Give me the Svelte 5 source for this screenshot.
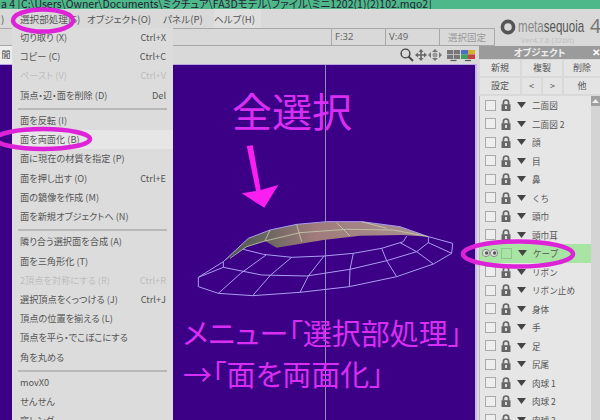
<script>
  const menuBar = ['オブジェクト(O)', 'パネル(P)', 'ヘルプ(H)'];
  const menu = [
    { t: '切り取り (X)', k: 'Ctrl+X' },
    { t: 'コピー (C)', k: 'Ctrl+C' },
    { t: 'ペースト (V)', k: 'Ctrl+V', off: true },
    { t: '頂点・辺・面を削除 (D)', k: 'Del' },
    { sep: true },
    { t: '面を反転 (I)' },
    { t: '面を両面化 (B)', hot: true },
    { t: '面に現在の材質を指定 (P)' },
    { t: '面を押し出す (O)', k: 'Ctrl+E' },
    { t: '面の鏡像を作成 (M)' },
    { t: '面を新規オブジェクトへ (N)' },
    { sep: true },
    { t: '隣り合う選択面を合成 (A)' },
    { t: '面を三角形化 (T)' },
    { t: '2頂点を対称にする (R)', k: 'Ctrl+R', off: true },
    { t: '選択頂点をくっつける (J)', k: 'Ctrl+J' },
    { t: '頂点の位置を揃える (L)' },
    { t: '頂点を平ら・でこぼこにする' },
    { t: '角を丸める' },
    { sep: true },
    { t: 'movX0' },
    { t: 'せんせん' },
    { t: '窓レンダ' }
  ];
  const objects = ['二面図', '二面図 2', '顔', '目', '鼻', 'くち', '頭巾', '頭巾耳', 'ケープ', 'リボン', 'リボン止め', '身体', '手', '足', '尻尾', '肉球 1', '肉球 2', '肉球 3'];
  const wire = [
    '55,262 55,290 115,310 218,317 360,307 508,290 650,260 760,222 815,190 818,160 745,140',
    '55,262 130,215 205,145 270,120 350,103 440,95 545,95 660,110 745,140',
    '130,215 130,232 245,255 380,258 510,238 620,212 710,185 745,158',
    '190,178 250,193 335,202 432,198 520,190 605,175 670,155 680,138',
    '115,310 182,250 258,195',
    '218,317 272,255 335,202',
    '360,307 385,258 432,198',
    '508,290 510,238 520,190',
    '650,260 620,212 605,175',
    '760,222 710,185 660,158',
    '815,190 745,158 745,140',
    '55,262 130,232'
  ];
  const top = [
    '150,205 200,170 255,153 360,128 500,118 640,120 745,140',
    '270,120 255,153',
    '350,103 365,155',
    '470,98 510,138',
    '545,95 620,115'
  ];
</script>

<div class="app">
  <div class="title">a 4 [C:\Users\Owner\Documents\ミクチュア\FA3Dモデル\ファイル\ミニ1202(1)(2)102.mqo2]</div>

  <div class="head">
    <div class="head-left">
      <div class="menubar">
        <span class="prev">)</span>
        <span class="first">選択部処理(S)</span>
        {#each menuBar as m, i}
          <span class={'mb mb' + i}>{m}</span>
        {/each}
      </div>
      <div class="status">
        <div class="cell grow"></div>
        <div class="cell f">F:32</div>
        <div class="cell v">V:49</div>
        <div class="cell fix">選択固定</div>
      </div>
    </div>
    <div class="logo">
      <div class="logo-line">
        <svg class="logo-mark" viewBox="0 0 16 16" width="16" height="16">
          <circle cx="8" cy="8" r="5.6" fill="none" stroke="#555" stroke-width="3.6" />
          <circle cx="8" cy="8" r="2.4" fill="#d8d8d8" />
        </svg>
        <span class="logo-text"><span class="lt">meta</span><span class="dk">sequoia</span></span><span class="four">4</span>
      </div>
      <div class="ver">Ver4.7.6 (32bit)</div>
    </div>
  </div>

  <div class="body">
    <div class="work">
      <div class="toolbar">
        <span class="tab">聞</span>
        <div class="tools">
          <svg viewBox="-3 0 78 14" width="78" height="14">
            <circle cx="5.5" cy="5.5" r="4.4" fill="none" stroke="#444" stroke-width="1.4" />
            <path d="M8.5 8.5 L13 13" stroke="#444" stroke-width="1.8" />
            <path d="M21 1 L18.5 4 H20.2 V6.2 H18 V4.5 L15 7 L18 9.5 V7.8 H20.2 V10 H18.5 L21 13 L23.5 10 H21.8 V7.8 H24 V9.5 L27 7 L24 4.5 V6.2 H21.8 V4 H23.5 Z" fill="#666" />
            <path d="M35 1 L38 4 H32 Z M35 13 L32 10 H38 Z M28 7 L31 4 V10 Z M42 7 L39 4 V10 Z" fill="#777" />
            <circle cx="35" cy="7" r="2.5" fill="#999" />
            <rect x="47" y="2" width="13" height="9" fill="#777" />
            <path d="M47 6.5 H60 M53.5 2 V11" stroke="#bbb" stroke-width="1" />
            <path d="M50.5 12.5 H56.5" stroke="#555" stroke-width="1.2" />
            <rect x="61" y="2" width="7" height="4.5" fill="#4a6fc0" />
            <rect x="68" y="2" width="7" height="4.5" fill="#d8b030" />
            <rect x="61" y="6.5" width="7" height="4.5" fill="#40a060" />
            <rect x="68" y="6.5" width="7" height="4.5" fill="#c84040" />
            <path d="M65 12.5 H71" stroke="#555" stroke-width="1.2" />
          </svg>
        </div>
      </div>
      <div class="view">
        <div class="axis"></div>
        <svg class="mesh" viewBox="0 0 840 360" width="280" height="120">
          <defs>
            <linearGradient id="skin" x1="0" x2="1" y1="0" y2="0">
              <stop offset="0" stop-color="#4a5a50" />
              <stop offset="0.22" stop-color="#6d6660" />
              <stop offset="0.45" stop-color="#a07c7c" />
              <stop offset="1" stop-color="#a89090" />
            </linearGradient>
          </defs>
          <polygon points="130,215 205,145 270,120 350,103 440,95 545,95 660,110 745,140 670,135 540,137 430,150 290,173 255,153 200,170" fill="url(#skin)" />
          {#each wire as p}
            <polyline points={p} fill="none" stroke="#ab9df2" stroke-width="3" />
          {/each}
          {#each top as p}
            <polyline points={p} fill="none" stroke="#c8d0b0" stroke-width="2.4" />
          {/each}
        </svg>
        <div class="note big">全選択</div>
        <div class="note l1">メニュー「選択部処理」</div>
        <div class="note l2">→「面を両面化」</div>
      </div>
    </div>

    <aside class="panel">
      <div class="p-head"><span>オブジェクト</span><span class="x">✕</span></div>
      <div class="btns">
        <span class="b">新規</span><span class="b">複製</span><span class="b">削除</span>
        <span class="b">設定</span>
        <span class="pair"><span class="b">&lt;</span><span class="b">&gt;</span></span>
        <span class="b">他</span>
      </div>
      <div class="listwrap">
        <div class="list">
          {#each objects as o, i}
            <div class="row" class:sel={i === 8}>
              {#if i === 8}
                <svg class="eyes" viewBox="0 0 16 10" width="16" height="10">
                  <circle cx="4" cy="5" r="3.6" fill="#e4e4e4" stroke="#888" />
                  <circle cx="12" cy="5" r="3.6" fill="#e4e4e4" stroke="#888" />
                  <circle cx="4.6" cy="5" r="1.7" fill="#555" />
                  <circle cx="12.6" cy="5" r="1.7" fill="#555" />
                </svg>
                <span class="check"></span>
              {:else}
                <span class="check"></span>
                <svg class="lock" viewBox="0 0 10 12" width="10" height="12">
                  <path d="M2.4 5.5 V3.6 A2.6 2.6 0 0 1 7.6 3.6 V5.5" fill="none" stroke="#666" stroke-width="1.7" />
                  <rect x="0.5" y="5.2" width="9" height="6.8" fill="#666" />
                  <rect x="4" y="7" width="2" height="3" fill="#ddd" />
                </svg>
              {/if}
              <svg class="tri" viewBox="0 0 9 6" width="9" height="6"><path d="M0 0 H9 L4.5 6 Z" fill="#444" /></svg>
              <span class="name">{o}</span>
            </div>
          {/each}
        </div>
        <div class="scroll"><svg viewBox="0 0 9 10" width="9" height="10"><path d="M1 7 L4.5 3 L8 7 Z" fill="#eee" /></svg></div>
      </div>
    </aside>
  </div>

  <div class="menu">
    {#each menu as m}
      {#if m.sep}
        <div class="sep"></div>
      {:else}
        <div class="item" class:off={m.off} class:hot={m.hot}>
          <span>{m.t}</span>
          {#if m.k}<span>{m.k}</span>{/if}
        </div>
      {/if}
    {/each}
  </div>

  <svg class="ink" viewBox="0 0 600 420" width="600" height="420">
    <ellipse cx="43" cy="20.5" rx="30" ry="11" />
    <ellipse cx="43" cy="139" rx="47" ry="10" />
    <ellipse cx="518" cy="254" rx="55" ry="12.5" />
    <polygon class="arrow" points="246.7,146 252.7,145.3 260.7,190 278.3,185 264.3,207.7 241.7,193.3 256,191" />
  </svg>
</div>

<style>
  :global(body) { margin: 0; }
  .app {
    position: relative;
    width: 600px;
    height: 420px;
    overflow: hidden;
    background: #d9d9d9;
    color: #444;
    font-family: "Noto Sans CJK JP", "Noto Sans", sans-serif;
    font-size: 9.2px;
    font-feature-settings: "palt";
    display: flex;
    flex-direction: column;
  }
  .title {
    height: 9px;
    flex: none;
    background: #4fb88a;
    color: #223;
    line-height: 7px;
    font-size: 10.5px;
    padding-left: 1px;
    overflow: hidden;
    white-space: nowrap;
  }
  .head { height: 37px; flex: none; display: flex; }
  .head-left { width: 495px; flex: none; display: flex; flex-direction: column; }
  .menubar {
    height: 19px;
    display: flex;
    align-items: center;
    white-space: nowrap;
    color: #555;
    font-size: 9.6px;
  }
  .prev { width: 20px; padding-left: 1px; box-sizing: border-box; }
  .first { width: 67px; }
  .mb { flex: none; }
  .mb0 { width: 76px; }
  .mb1 { width: 51px; }
  .mb2 { background: #dfdfdf; padding: 3px 6px 3px 0; }
  .status { height: 18px; display: flex; }
  .cell {
    box-sizing: border-box;
    border: 1px solid #a8a8a8;
    border-left: none;
    line-height: 16px;
    padding-left: 3px;
    color: #666;
    font-family: "Noto Sans", sans-serif;
    font-size: 9.5px;
  }
  .grow { flex: 1; }
  .f, .v { width: 54px; }
  .fix {
    width: 55px;
    padding: 0;
    text-align: center;
    font-family: "Noto Sans CJK JP", sans-serif;
    color: #999;
  }
  .logo { flex: 1; padding: 9px 0 0 5px; min-width: 0; }
  .logo-line { display: flex; align-items: center; height: 17px; white-space: nowrap; }
  .logo-mark { margin-right: 2px; flex: none; }
  .logo-text {
    display: inline-block;
    width: 72px;
    flex: none;
    transform: scaleX(0.68);
    transform-origin: left center;
    font-family: "Liberation Sans", sans-serif;
    font-size: 17px;
    line-height: 17px;
  }
  .lt { color: #888; }
  .dk { color: #555; }
  .four { font-family: "Noto Sans", sans-serif; font-size: 19px; color: #777; line-height: 17px; }
  .ver { font-family: "Noto Sans", sans-serif; font-size: 7.5px; line-height: 11px; color: #c0c0c0; text-align: center; padding-right: 5px; }

  .body { flex: 1; display: flex; min-height: 0; }
  .work { width: 479px; flex: none; display: flex; flex-direction: column; }
  .toolbar { height: 18px; flex: none; display: flex; align-items: center; justify-content: space-between; }
  .tab { background: #eee; width: 12px; height: 18px; text-align: center; line-height: 18px; font-size: 9px; }
  .tools { display: flex; padding-right: 4px; }
  .view {
    position: relative;
    flex: 1;
    margin-right: 2px;
    background: #3b0085;
    border-top: 1px solid #b9a2e6;
    border-right: 2px solid #c9b8ee;
    overflow: hidden;
  }
  .axis { position: absolute; left: 325px; top: 0; bottom: 0; width: 1px; background: #8f8cb8; }
  .mesh { position: absolute; left: 180px; top: 125px; }
  .note { position: absolute; color: #d82ef2; white-space: nowrap; line-height: 1; }
  .big { left: 232px; top: 25px; font-size: 40px; font-feature-settings: normal; }
  .l1, .l2 { left: 183px; font-size: 29px; }
  .l1 { top: 253px; }
  .l2 { top: 294px; }

  .panel { flex: 1; display: flex; flex-direction: column; background: #e0e0e0; min-width: 0; }
  .p-head {
    height: 13px;
    flex: none;
    background: #9b9b9b;
    color: #eee;
    font-weight: 700;
    font-size: 9.5px;
    line-height: 13px;
    text-align: center;
    position: relative;
  }
  .x { position: absolute; right: 0; top: 0; color: #fff; }
  .btns {
    display: grid;
    grid-template-columns: 40px 40px 1fr;
    gap: 2px;
    padding: 1px 0 2px 1px;
    flex: none;
    background: #d9d9d9;
  }
  .b {
    height: 16px;
    line-height: 16px;
    text-align: center;
    background: #e4e4e4;
    color: #555;
    font-size: 9px;
  }
  .pair { display: grid; grid-template-columns: 1fr 1fr; gap: 2px; }
  .listwrap { flex: 1; display: flex; min-height: 0; overflow: hidden; border-left: 1px solid #bbb; }
  .list { width: 111px; flex: none; background: #e6e6e6; }
  .row { height: 18.5px; display: flex; align-items: center; padding-left: 5px; white-space: nowrap; color: #555; font-size: 8.6px; font-feature-settings: normal; }
  .sel { background: #a8e4a4; padding-left: 2px; }
  .check { width: 9px; height: 9px; border: 1px solid #aaa; background: #eee; flex: none; }
  .sel .check { background: #a8e4a4; border-color: #8ec48c; margin-left: 3px; }
  .eyes { flex: none; }
  .lock { flex: none; margin-left: 5px; }
  .tri { flex: none; margin-left: 6px; }
  .name { margin-left: 6px; }
  .scroll { flex: 1; background: #d4d4d4; }
  .scroll svg { display: block; background: #a0a0a0; }

  .menu {
    position: absolute;
    left: 12px;
    top: 28px;
    width: 161px;
    height: 392px;
    box-sizing: border-box;
    background: #dcdcdc;
    overflow: hidden;
    color: #555;
  }
  .item {
    height: 19.2px;
    line-height: 19.2px;
    display: flex;
    justify-content: space-between;
    padding: 0 7px 0 8px;
    white-space: nowrap;
  }
  .off { color: #bcbcbc; }
  .hot { background: #e6e6e6; }
  .sep { height: 2px; margin: 3px 6px 1.3px; background: #b8b8b8; }

  .ink { position: absolute; left: 0; top: 0; pointer-events: none; }
  .ink ellipse { fill: none; stroke: #dd22d8; stroke-width: 4.5; }
  .arrow { fill: #fb1ef0; }
</style>
